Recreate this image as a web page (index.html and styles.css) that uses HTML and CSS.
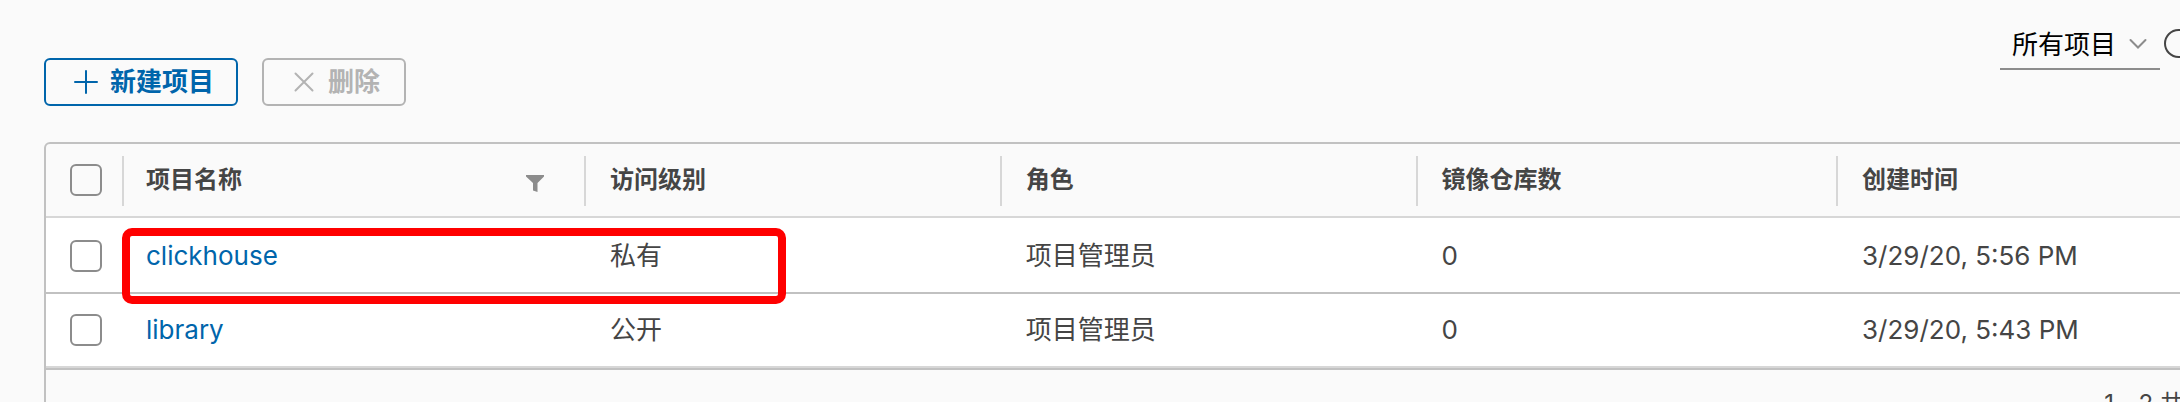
FILE: index.html
```html
<!DOCTYPE html>
<html lang="zh-CN">
<head>
<meta charset="utf-8">
<title>项目</title>
<link rel="stylesheet" href="styles.css">
</head>
<body>
<main class="content">
  <header class="toolbar">
    <div class="actions">
      <button class="btn btn-create" type="button">
        <svg class="btn-icon" viewBox="0 0 24 24" aria-hidden="true"><path d="M12 1v22M1 12h22"/></svg>
        <span>新建项目</span>
      </button>
      <button class="btn btn-delete" type="button" disabled>
        <svg class="btn-icon" viewBox="0 0 24 24" aria-hidden="true"><path d="M3.500 3.500l17 17M20.500 3.500l-17 17"/></svg>
        <span>删除</span>
      </button>
    </div>
    <div class="filters">
      <div class="select-wrap">
        <select class="select" aria-label="项目类型">
          <option>所有项目</option>
        </select>
        <svg class="chevron" viewBox="0 0 18 12" aria-hidden="true"><path d="M1.500 2l7.500 7.500L16.500 2"/></svg>
      </div>
      <button class="search" type="button" aria-label="搜索">
        <svg class="search-icon" viewBox="0 0 36 36" aria-hidden="true"><circle cx="14.500" cy="14.500" r="13.500"/><path d="M24 24l10 10"/></svg>
      </button>
    </div>
  </header>

  <section class="datagrid">
    <table class="grid">
      <colgroup>
        <col class="col-check">
        <col class="col-name">
        <col class="col-access">
        <col class="col-role">
        <col class="col-repos">
        <col>
      </colgroup>
      <thead>
        <tr>
          <th class="check-cell"><input class="check" type="checkbox" aria-label="全选"></th>
          <th><div class="head head-name">项目名称
            <button class="filter" type="button" aria-label="过滤"><svg class="filter-icon" viewBox="0 0 18 17" aria-hidden="true"><path d="M0 0h18v1.500L11.500 8v9L7 15.500V8L0 1.500z"/></svg></button>
          </div></th>
          <th><div class="head">访问级别</div></th>
          <th><div class="head">角色</div></th>
          <th><div class="head">镜像仓库数</div></th>
          <th><div class="head">创建时间</div></th>
        </tr>
      </thead>
      <tbody>
        <tr>
          <td class="check-cell"><input class="check" type="checkbox" aria-label="选择 clickhouse"></td>
          <td class="name-cell"><a class="link" href="#clickhouse">clickhouse</a></td>
          <td>私有</td>
          <td>项目管理员</td>
          <td>0</td>
          <td>3/29/20, 5:56 PM</td>
        </tr>
        <tr>
          <td class="check-cell"><input class="check" type="checkbox" aria-label="选择 library"></td>
          <td class="name-cell"><a class="link" href="#library">library</a></td>
          <td>公开</td>
          <td>项目管理员</td>
          <td>0</td>
          <td>3/29/20, 5:43 PM</td>
        </tr>
      </tbody>
    </table>
    <footer class="grid-footer">1 - 2 共 2 条记录</footer>
    <div class="highlight"></div>
  </section>
</main>
</body>
</html>
```
FILE: styles.css
```css
* { box-sizing: border-box; }

html, body { overflow: hidden; }

body {
  margin: 0;
  background: #fafafa;
  color: #454545;
  font-family: Inter, "Noto Sans CJK SC", sans-serif;
  font-size: 26px;
  line-height: 36px;
}

button, select { font: inherit; }

.content { padding-left: 44px; }

.toolbar {
  display: flex;
  justify-content: space-between;
  align-items: flex-start;
  margin-bottom: 36px;
}

.actions {
  display: flex;
  gap: 24px;
  padding-top: 58px;
}

.btn {
  display: flex;
  align-items: center;
  gap: 12px;
  height: 48px;
  padding: 0 24px 0 28px;
  border: 2px solid currentColor;
  border-radius: 6px;
  background: transparent;
  font-weight: bold;
}

.btn-create {
  padding-right: 22px;
  color: #0065ab;
}

.btn-delete { color: #b3b3b3; }

.btn-icon {
  width: 24px;
  height: 24px;
  fill: none;
  stroke: currentColor;
  stroke-width: 2;
  stroke-linecap: round;
}

.filters {
  display: flex;
  gap: 4px;
  margin-right: -20px;
  padding-top: 20px;
}

.select-wrap { position: relative; }

.select {
  display: block;
  width: 160px;
  height: 50px;
  padding: 2px 40px 0 12px;
  border: 0;
  border-bottom: 2px solid #8c8c8c;
  border-radius: 0;
  appearance: none;
  background: transparent;
  color: #000;
}

.chevron {
  position: absolute;
  top: 18px;
  right: 13px;
  width: 18px;
  height: 12px;
  fill: none;
  stroke: #8c8c8c;
  stroke-width: 2;
  stroke-linecap: round;
  pointer-events: none;
}

.search {
  height: 36px;
  margin-top: 9px;
  padding: 0;
  border: 0;
  background: transparent;
}

.search-icon {
  display: block;
  width: 36px;
  height: 36px;
  fill: none;
  stroke: #454545;
  stroke-width: 2;
}

.datagrid {
  position: relative;
  margin-right: -178px;
  border: 2px solid #c1c1c1;
  border-radius: 6px;
}

.grid {
  width: 100%;
  table-layout: fixed;
  border-collapse: separate;
  border-spacing: 0;
}

.col-check { width: 76px; }
.col-name { width: 20%; }
.col-access { width: 18%; }
.col-role { width: 18%; }
.col-repos { width: 18.2%; }

th {
  padding: 12px 0 10px;
  border-bottom: 2px solid #d7d7d7;
  text-align: left;
  font-size: 24px;
}

.head {
  display: flex;
  justify-content: space-between;
  height: 50px;
  padding: 6px 40px 0 24px;
  border-left: 2px solid #d7d7d7;
}

.head-name { padding-left: 22px; }

.filter {
  height: 36px;
  padding: 6px 0 0;
  border: 0;
  background: transparent;
}

.filter-icon {
  display: block;
  width: 18px;
  height: 17px;
  fill: #8c8c8c;
}

td {
  height: 74px;
  padding: 0 26px;
  border-top: 2px solid #c1c1c1;
  background: #fff;
}

tbody tr:first-child td { border-top-color: #fff; }

tbody tr:last-child td {
  height: 76px;
  border-bottom: 2px solid #d7d7d7;
}

.name-cell { padding-left: 24px; }

th.check-cell { padding: 10px 0 10px 24px; }
td.check-cell { padding: 0 0 0 24px; }

.check {
  display: block;
  width: 32px;
  height: 32px;
  margin: 0;
  border: 2px solid #8c8c8c;
  border-radius: 6px;
  appearance: none;
}

.link {
  color: #0065ab;
  text-decoration: none;
}

.grid-footer {
  padding: 16px 72px 16px 24px;
  border-top: 2px solid #c1c1c1;
  text-align: right;
  font-size: 24px;
}

.highlight {
  position: absolute;
  top: 84px;
  left: 76px;
  width: 664px;
  height: 76px;
  border: 8px solid #f00;
  border-radius: 10px;
  pointer-events: none;
}
```
